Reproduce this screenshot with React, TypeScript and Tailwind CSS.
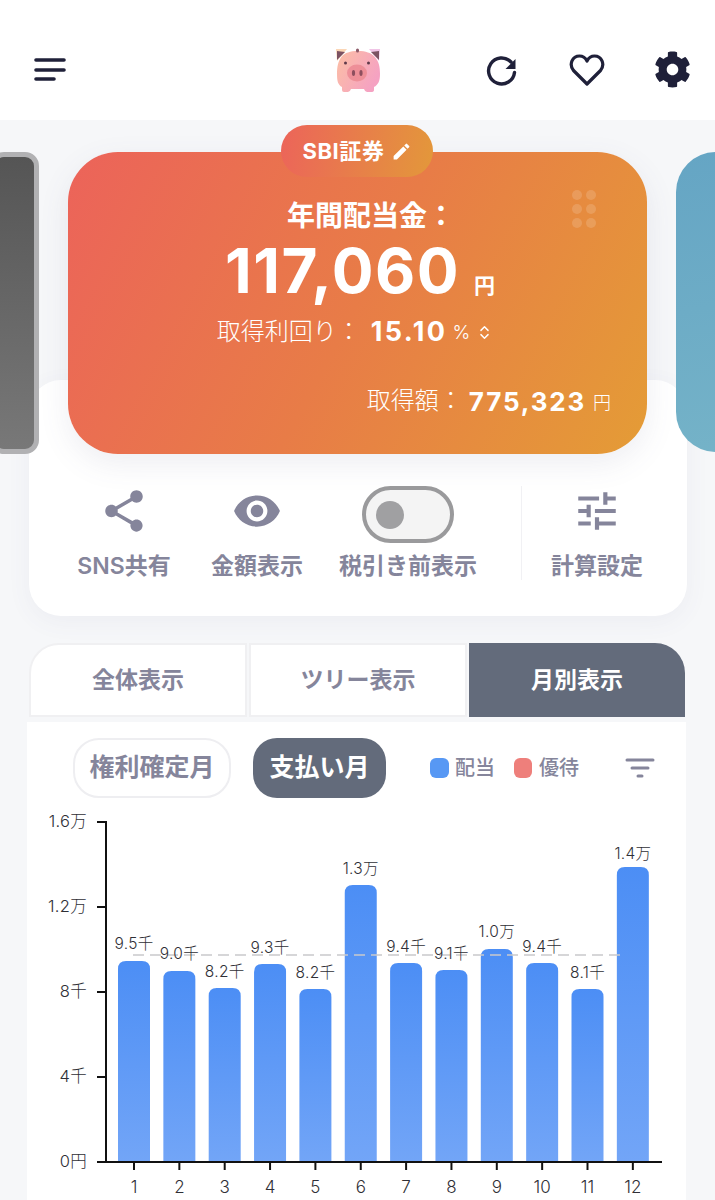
import { ChevronsUpDown } from "lucide-react";
import { FaCog } from "react-icons/fa";
import { MdEdit, MdShare, MdTune, MdVisibility } from "react-icons/md";

const bars = [
  { month: 1, top: 961, label: "9.5千", labelY: 944 },
  { month: 2, top: 971, label: "9.0千", labelY: 954 },
  { month: 3, top: 988, label: "8.2千", labelY: 972 },
  { month: 4, top: 964, label: "9.3千", labelY: 948 },
  { month: 5, top: 989, label: "8.2千", labelY: 973 },
  { month: 6, top: 885, label: "1.3万", labelY: 869 },
  { month: 7, top: 963, label: "9.4千", labelY: 947 },
  { month: 8, top: 970, label: "9.1千", labelY: 954 },
  { month: 9, top: 949, label: "1.0万", labelY: 932 },
  { month: 10, top: 963, label: "9.4千", labelY: 947 },
  { month: 11, top: 989, label: "8.1千", labelY: 973 },
  { month: 12, top: 867, label: "1.4万", labelY: 854 },
];

const yTicks = [
  { y: 822, label: "1.6万" },
  { y: 907, label: "1.2万" },
  { y: 992, label: "8千" },
  { y: 1077, label: "4千" },
  { y: 1162, label: "0円" },
];

function Pig() {
  return (
    <svg width="48" height="48" viewBox="0 0 48 48">
      <defs>
        <linearGradient id="pig" x1="0" y1="0" x2="1" y2="0.5">
          <stop offset="0" stopColor="#fcbfa4" />
          <stop offset="1" stopColor="#f5a2c2" />
        </linearGradient>
      </defs>
      <path d="M2 2 L13 2 L3 14 Z" fill="#fbd6b6" />
      <path d="M46 2 L35 2 L45 14 Z" fill="#f0c4e6" />
      <path d="M3 4 L3 13 L11 5 Z" fill="#7c5262" />
      <path d="M45 4 L45 13 L37 5 Z" fill="#7c5262" />
      <path d="M24 4 C32 4 37 6 40 9 C45 14 46 20 46 27 C46 34 44 38 40 40 L40 43 Q40 45 37 45 L33 45 Q31 45 30 42 L17 42 Q16 45 14 45 L10 45 Q8 45 8 43 L8 40 C4 38 3 34 3 27 C3 20 4 14 8 9 C11 6 16 4 24 4 Z" fill="url(#pig)" />
      <rect x="22" y="1.5" width="3" height="4" rx="1.5" fill="#8c5a68" />
      <circle cx="11.5" cy="16" r="1.5" fill="#5f3a4a" />
      <circle cx="34.5" cy="16" r="1.5" fill="#5f3a4a" />
      <ellipse cx="23" cy="26" rx="10" ry="8.5" fill="#ee8f98" />
      <ellipse cx="19.5" cy="26" rx="1.6" ry="3" fill="#8e4f5e" />
      <ellipse cx="27" cy="26" rx="1.6" ry="3" fill="#8e4f5e" />
    </svg>
  );
}

function ActionLabel({ children }: { children: React.ReactNode }) {
  return <p className="text-[23px] leading-[30px] font-semibold text-[#85859b] whitespace-nowrap">{children}</p>;
}

export default function App() {
  return (
    <div className="relative h-[1200px] w-[715px] overflow-hidden bg-[#f6f7f9] font-['Inter','Noto_Sans_CJK_JP',sans-serif]">
      {/* header */}
      <div className="flex h-[120px] items-start bg-white pl-[34px] pt-[47px] text-[#1f2039]">
        <svg width="32" height="42" viewBox="0 0 32 42">
          <path d="M2 13H30M2 23H30M2 32H20" stroke="#1f2039" strokeWidth="3.6" strokeLinecap="round" fill="none" />
        </svg>
        <div className="ml-[268px]">
          <Pig />
        </div>
        <svg width="32" height="32" viewBox="0 0 32 32" className="ml-[104px] mt-[8px]">
          <path d="M25 7 A13 13 0 1 0 28.5 17.5" stroke="#1f2039" strokeWidth="3.4" fill="none" strokeLinecap="round" />
          <path d="M29.5 4 L29.5 14 L19.5 14 Z" fill="#1f2039" />
        </svg>
        <svg width="36" height="34" viewBox="0 0 36 34" className="ml-[51px] mt-[6px]">
          <path d="M18 31 L4.5 17.5 C-0.5 11 3.5 3 10.5 3 C14 3 16.5 5 18 8 C19.5 5 22 3 25.5 3 C32.5 3 36.5 11 31.5 17.5 Z" stroke="#1f2039" strokeWidth="3.2" fill="none" strokeLinejoin="round" />
        </svg>
        <FaCog className="ml-[49px] mt-[4px] text-[37px] text-[#1f2039]" />
      </div>

      {/* cards */}
      <div className="relative z-10 mt-[32px] flex h-[302px] gap-[29px]">
        <div className="-ml-[10px] h-[302px] w-[49px] shrink-0 rounded-[14px] border-[5px] border-[#b1b1b3] bg-[linear-gradient(180deg,#555555,#787878)]" />
        <div className="relative h-[302px] w-[579px] shrink-0 rounded-[50px] bg-[linear-gradient(118deg,#ec635a_0%,#e87c47_50%,#e49c36_100%)] text-white shadow-[0_10px_30px_rgba(90,90,130,0.10)]">
          <div className="absolute -top-[27px] left-[213px] flex h-[52px] w-[152px] items-center justify-center gap-[6px] rounded-[26px] bg-[linear-gradient(100deg,#ec645a,#e3983a)]">
            <span className="text-[22px] font-bold tracking-[0.6px]">SBI証券</span>
            <MdEdit className="text-[21px]" />
          </div>
          <div className="absolute left-[504px] top-[38px] grid grid-cols-2 gap-x-[4px] gap-y-[4px]">
            {[0, 1, 2, 3, 4, 5].map((i) => (
              <span key={i} className="h-[10px] w-[10px] rounded-full bg-white/15" />
            ))}
          </div>
          <div className="flex flex-col items-center pt-[46px]">
            <p className="h-[36px] pl-[27px] text-[28px] leading-[36px] font-bold">年間配当金：</p>
            <div className="mt-[1px] flex h-[72px] items-baseline pl-[5px]">
              <span className="text-[62px] leading-[72px] font-bold tracking-[1.5px]">117,060</span>
              <span className="ml-[14px] text-[21px] font-semibold">円</span>
            </div>
            <div className="mt-[7px] flex h-[36px] items-center pr-[5px]">
              <span className="text-[24px] font-light">取得利回り：</span>
              <span className="ml-[10px] text-[27px] font-bold tracking-[2.4px]">15.10</span>
              <span className="ml-[5px] mt-[3px] text-[19px] font-light">%</span>
              <ChevronsUpDown size={17} strokeWidth={2} className="ml-[6px]" />
            </div>
            <div className="mt-[33px] flex h-[36px] w-full items-center justify-end pr-[36px]">
              <span className="text-[24px] font-light">取得額：</span>
              <span className="ml-[6px] text-[26px] font-bold tracking-[1.8px]">775,323</span>
              <span className="ml-[7px] mt-[2px] text-[18px] font-light">円</span>
            </div>
          </div>
        </div>
        <div className="h-[300px] w-[120px] shrink-0 rounded-[40px] bg-[linear-gradient(170deg,#65a5c4,#75b3c8)]" />
      </div>

      {/* actions panel */}
      <div className="relative -mt-[74px] ml-[29px] flex h-[236px] w-[658px] items-start rounded-[32px] bg-white pt-[106px] shadow-[0_6px_24px_rgba(90,90,130,0.06)]">
        <div className="flex w-[190px] flex-col items-center">
          <MdShare className="h-[50px] w-[50px] text-[#85859b]" />
          <div className="mt-[15px]"><ActionLabel>SNS共有</ActionLabel></div>
        </div>
        <div className="-ml-[6px] flex w-[88px] flex-col items-center">
          <MdVisibility className="h-[50px] w-[50px] text-[#85859b]" />
          <div className="mt-[15px]"><ActionLabel>金額表示</ActionLabel></div>
        </div>
        <div className="ml-[32px] flex w-[150px] flex-col items-center">
          <div className="flex h-[57px] w-[92px] items-center rounded-[29px] border-[4px] border-[#9a9a9c] bg-[#f4f4f4] pl-[10px]">
            <span className="h-[28px] w-[28px] rounded-full bg-[#a0a0a2]" />
          </div>
          <div className="mt-[8px]"><ActionLabel>税引き前表示</ActionLabel></div>
        </div>
        <div className="ml-[38px] h-[94px] w-px bg-[#f1f1f4]" />
        <div className="ml-[37px] flex w-[76px] flex-col items-center">
          <MdTune className="h-[50px] w-[50px] text-[#85859b]" />
          <div className="mt-[15px]"><ActionLabel>計算設定</ActionLabel></div>
        </div>
      </div>

      {/* tabs */}
      <div className="ml-[29px] mt-[27px] flex h-[74px] w-[656px] gap-[2px]">
        <div className="flex w-[218px] items-center justify-center rounded-tl-[30px] border-[2px] border-[#f0f0f2] bg-white text-[23px] font-semibold text-[#85859b]">全体表示</div>
        <div className="flex w-[218px] items-center justify-center border-[2px] border-[#f0f0f2] bg-white text-[23px] font-semibold text-[#85859b]">ツリー表示</div>
        <div className="flex w-[216px] items-center justify-center rounded-tr-[30px] bg-[#636b7b] text-[23px] font-semibold text-white">月別表示</div>
      </div>

      {/* monthly panel */}
      <div className="ml-[27px] mt-[5px] h-[500px] w-[659px] bg-white">
        <div className="flex items-center pl-[46px] pt-[16px]">
          <div className="flex h-[60px] w-[158px] items-center justify-center rounded-[26px] border-[2px] border-[#eeeef1] text-[25px] font-bold text-[#85859b]">権利確定月</div>
          <div className="ml-[22px] flex h-[60px] w-[133px] items-center justify-center rounded-[24px] bg-[#636b7b] text-[25px] font-bold text-white">支払い月</div>
          <span className="ml-[44px] h-[20px] w-[19px] rounded-[6px] bg-[#5798f4]" />
          <span className="ml-[6px] text-[20px] font-medium text-[#85859b]">配当</span>
          <span className="ml-[19px] h-[20px] w-[18px] rounded-[6px] bg-[#ee7f7b]" />
          <span className="ml-[7px] text-[20px] font-medium text-[#85859b]">優待</span>
          <svg width="30" height="22" viewBox="0 0 30 22" className="ml-[46px]">
            <path d="M2 3H28M7 11H23M13 19H17" stroke="#85859b" strokeWidth="3" strokeLinecap="round" fill="none" />
          </svg>
        </div>

        {/* bar chart, coordinates are page based */}
        <svg width="659" height="392" viewBox="27 808 659 392" className="mt-[10px] block">
          <defs>
            <linearGradient id="bar" x1="0" y1="0" x2="0" y2="1">
              <stop offset="0" stopColor="#4c8ef5" />
              <stop offset="1" stopColor="#72a5f7" />
            </linearGradient>
          </defs>
          {bars.map((b, i) => {
            const x = 118 + i * 45.35;
            return (
              <path
                key={b.month}
                d={`M${x} 1161 V${b.top + 8} Q${x} ${b.top} ${x + 8} ${b.top} H${x + 24} Q${x + 32} ${b.top} ${x + 32} ${b.top + 8} V1161 Z`}
                fill="url(#bar)"
              />
            );
          })}
          <line x1="133" y1="955" x2="626" y2="955" stroke="#c9c9cb" strokeWidth="1.3" strokeDasharray="11 6" />
          <path d="M106 821V1162M97 1162H662" stroke="#111" strokeWidth="2" fill="none" />
          {yTicks.map((t) => (
            <g key={t.label}>
              <line x1="97" y1={t.y} x2="106" y2={t.y} stroke="#111" strokeWidth="2" />
              <text x="87" y={t.y + 5} textAnchor="end" fontSize="16.5" fontWeight="300" letterSpacing="0.3" fill="#2f2f36">{t.label}</text>
            </g>
          ))}
          {bars.map((b, i) => {
            const cx = 134 + i * 45.35;
            return (
              <g key={b.month}>
                <line x1={cx} y1="1162" x2={cx} y2="1170" stroke="#111" strokeWidth="2" />
                <text x={cx} y="1193" textAnchor="middle" fontSize="17" fontWeight="300" fill="#2f2f36">{b.month}</text>
                <text x={cx} y={b.labelY + 5} textAnchor="middle" fontSize="15.5" fontWeight="300" letterSpacing="0.3" fill="#2f2f36">{b.label}</text>
              </g>
            );
          })}
        </svg>
      </div>
    </div>
  );
}
